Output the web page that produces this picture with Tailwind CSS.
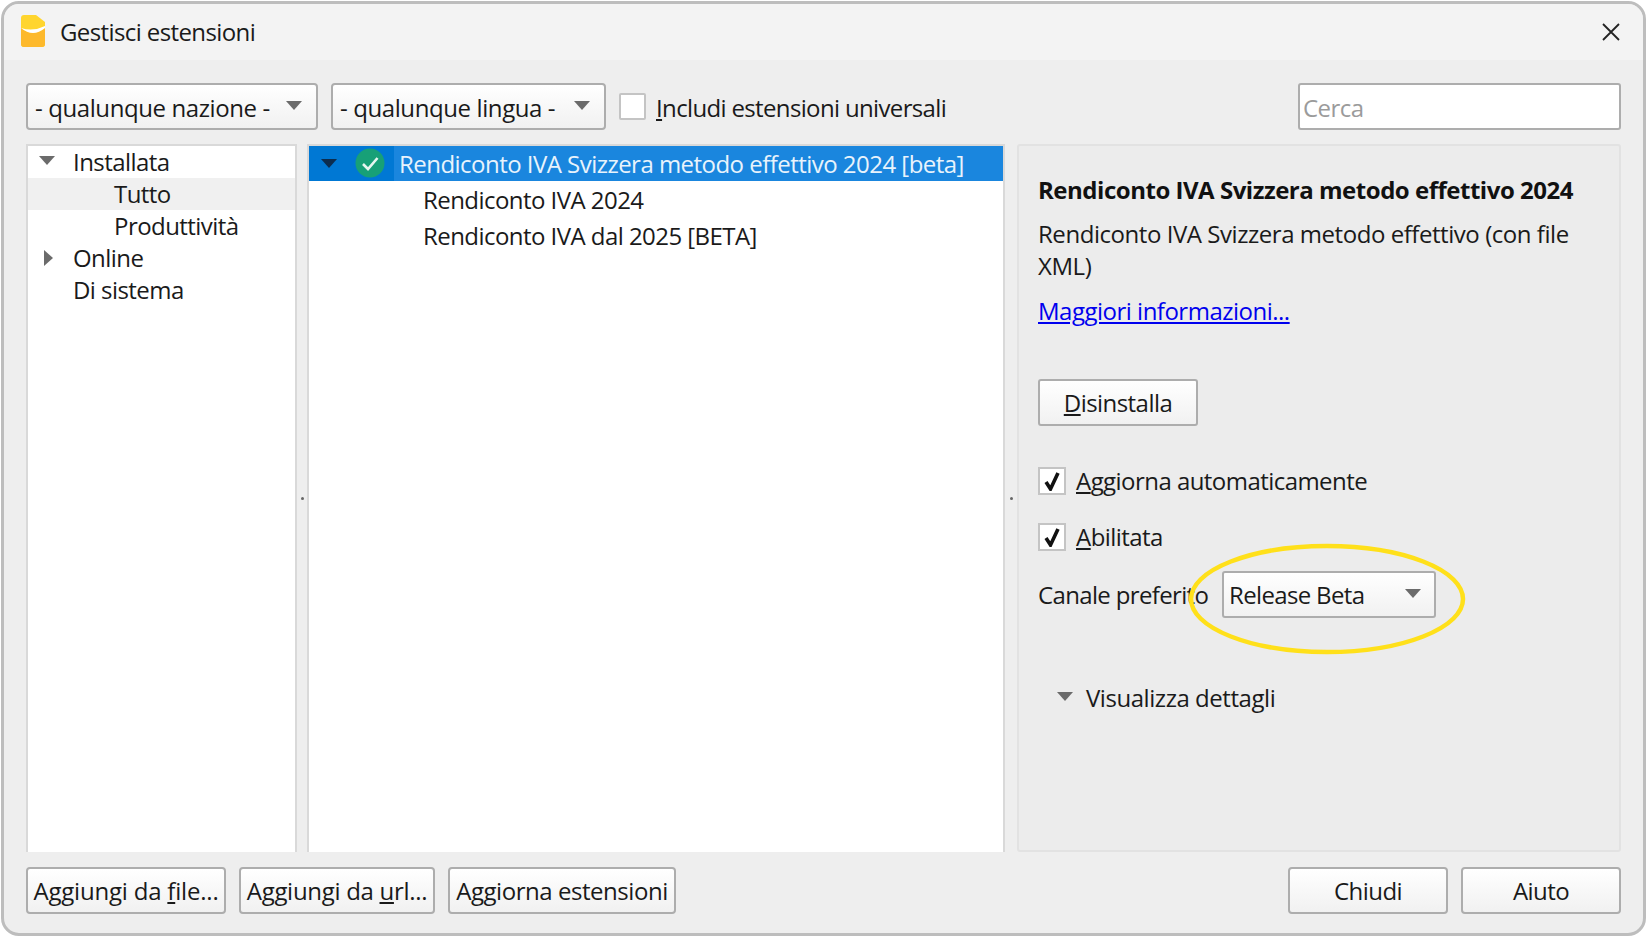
<!DOCTYPE html>
<html lang="it">
<head>
<meta charset="UTF-8">
<title>Gestisci estensioni</title>
<script src="https://cdn.jsdelivr.net/npm/@tailwindcss/browser@4"></script>
</head>
<body class="bg-white w-[1648px] h-[938px] overflow-hidden font-['Open_Sans',sans-serif] text-[24px] tracking-[-0.55px] text-[#1a1a1a]">
<div class="relative ml-[1px] mt-[1px] w-[1645px] h-[935px] border-[3px] border-[#bdbdbd] rounded-[18px] bg-[#eeeeee] flex flex-col overflow-hidden">

  <!-- title bar -->
  <div class="h-[56px] shrink-0 bg-[#f3f3f3] flex items-center pl-[17px] pr-[21px]">
    <svg class="w-[24px] h-[32px] -mt-[3px]" viewBox="0 0 24 32">
      <path d="M3 0H15L24 7V29a3 3 0 0 1-3 3H3a3 3 0 0 1-3-3V3a3 3 0 0 1 3-3Z" fill="#ffd52e"/>
      <path d="M0 13Q12 22 24 13V29a3 3 0 0 1-3 3H3a3 3 0 0 1-3-3Z" fill="#fdb92c"/>
      <path d="M0 13Q12 17 24 11V13Q12 23 0 13Z" fill="#fff"/>
    </svg>
    <span class="ml-[15px] tracking-[-0.6px]">Gestisci estensioni</span>
    <svg class="ml-auto w-[18px] h-[18px] mr-[2px]" viewBox="0 0 18 18" fill="none" stroke="#222" stroke-width="1.8"><path d="M1 1L17 17M17 1L1 17"/></svg>
  </div>

  <!-- filters -->
  <div class="flex items-center mt-[23px] px-[22px] h-[47px] shrink-0">
    <div class="w-[292px] h-full flex items-center pl-[7px] pr-[14px] border-2 border-[#adadad] rounded-[4px] bg-linear-to-b from-white to-[#f1f1f1]">
      <span class="pt-[2px] tracking-[-0.4px]">- qualunque nazione -</span>
      <svg class="ml-auto w-[16px] h-[9px] -mt-[3px]" viewBox="0 0 16 9"><path d="M0 0H16L8 9Z" fill="#6b6b6b"/></svg>
    </div>
    <div class="ml-[13px] w-[275px] h-full flex items-center pl-[7px] pr-[14px] border-2 border-[#adadad] rounded-[4px] bg-linear-to-b from-white to-[#f1f1f1]">
      <span class="pt-[2px] tracking-[-0.4px]">- qualunque lingua -</span>
      <svg class="ml-auto w-[16px] h-[9px] -mt-[3px]" viewBox="0 0 16 9"><path d="M0 0H16L8 9Z" fill="#6b6b6b"/></svg>
    </div>
    <div class="ml-[13px] w-[27px] h-[27px] border-2 border-[#c4c4c4] rounded-[2px] bg-white"></div>
    <span class="ml-[10px] pt-[2px] tracking-[-0.65px]"><u>I</u>ncludi estensioni universali</span>
    <div class="ml-auto w-[323px] h-full flex items-center pl-[3px] pt-[2px] border-2 border-[#adadad] rounded-[3px] bg-white text-[#9b9b9b]">Cerca</div>
  </div>

  <!-- panels -->
  <div class="flex mt-[14px] mx-[22px] h-[708px] shrink-0">
    <!-- tree -->
    <div class="w-[271px] bg-white border-t-2 border-x-2 border-[#d9d9d9]">
      <div class="h-[32px] flex items-center relative pl-[45px]">
        <svg class="absolute left-[11px] top-[10px] w-[16px] h-[9px]" viewBox="0 0 16 9"><path d="M0 0H16L8 9Z" fill="#6b6b6b"/></svg>
        Installata
      </div>
      <div class="h-[32px] flex items-center pl-[86px] bg-[#f0f0f0]">Tutto</div>
      <div class="h-[32px] flex items-center pl-[86px]">Produttività</div>
      <div class="h-[32px] flex items-center relative pl-[45px]">
        <svg class="absolute left-[16px] top-[8px] w-[9px] h-[16px]" viewBox="0 0 9 16"><path d="M0 0L9 8L0 16Z" fill="#6b6b6b"/></svg>
        Online
      </div>
      <div class="h-[32px] flex items-center pl-[45px]">Di sistema</div>
    </div>
    <!-- splitter -->
    <div class="w-[10px] flex items-center justify-center"><div class="w-[3px] h-[3px] bg-[#666] rounded-full"></div></div>
    <!-- list -->
    <div class="w-[698px] bg-white border-t-2 border-x-2 border-[#d9d9d9]">
      <div class="h-[35px] flex items-center bg-[#1a86de] text-[#e8f3fc]">
        <div class="w-[85px] h-full bg-[#0078d4] relative shrink-0">
          <svg class="absolute left-[12px] top-[13px] w-[16px] h-[9px]" viewBox="0 0 16 9"><path d="M0 0H16L8 9Z" fill="#0c2d4f"/></svg>
          <svg class="absolute left-[46px] top-[2px] w-[30px] h-[30px]" viewBox="0 0 30 30"><circle cx="15" cy="15" r="14.5" fill="#17a077"/><path d="M8 16l5 5 9.5-11" fill="none" stroke="#e6f5ef" stroke-width="2.6"/></svg>
        </div>
        <span class="ml-[5px] tracking-[-0.53px]">Rendiconto IVA Svizzera metodo effettivo 2024 [beta]</span>
      </div>
      <div class="h-[37px] flex items-center pl-[114px]">Rendiconto IVA 2024</div>
      <div class="h-[36px] flex items-center pl-[114px]">Rendiconto IVA dal 2025 [BETA]</div>
    </div>
    <!-- splitter -->
    <div class="w-[12px] flex items-center justify-center"><div class="w-[3px] h-[3px] bg-[#666] rounded-full"></div></div>
    <!-- details -->
    <div class="w-[604px] bg-[#ececec] border-2 border-[#e2e2e2] rounded-[3px] pl-[19px] pt-[28px] flex flex-col items-start">
      <div class="font-bold leading-[32px] tracking-[-0.48px] text-[#111]">Rendiconto IVA Svizzera metodo effettivo 2024</div>
      <div class="mt-[12px] leading-[32px] w-[560px] tracking-[-0.45px]">Rendiconto IVA Svizzera metodo effettivo (con file XML)</div>
      <a class="mt-[13px] leading-[32px] text-[#0000ee] underline tracking-[-0.5px]">Maggiori informazioni...</a>
      <div class="mt-[52px] w-[160px] h-[47px] flex items-center justify-center border-2 border-[#adadad] rounded-[3px] bg-linear-to-b from-white to-[#f1f1f1]"><span><u>D</u>isinstalla</span></div>
      <div class="mt-[41px] flex items-center h-[28px]">
        <div class="w-[28px] h-[28px] border-2 border-[#c4c4c4] bg-white flex items-center justify-center">
          <svg class="w-[16px] h-[19px]" viewBox="0 0 16 19" fill="none" stroke="#111" stroke-width="3.6"><path d="M2 10l4.5 7L14 1"/></svg>
        </div>
        <span class="ml-[10px]"><u>A</u>ggiorna automaticamente</span>
      </div>
      <div class="mt-[28px] flex items-center h-[28px]">
        <div class="w-[28px] h-[28px] border-2 border-[#c4c4c4] bg-white flex items-center justify-center">
          <svg class="w-[16px] h-[19px]" viewBox="0 0 16 19" fill="none" stroke="#111" stroke-width="3.6"><path d="M2 10l4.5 7L14 1"/></svg>
        </div>
        <span class="ml-[10px]"><u>A</u>bilitata</span>
      </div>
      <div class="mt-[20px] flex items-center h-[47px]">
        <span class="w-[184px] tracking-[-0.65px]">Canale preferito</span>
        <div class="w-[214px] h-full flex items-center pl-[5px] pr-[13px] border-2 border-[#adadad] rounded-[3px] bg-linear-to-b from-white to-[#f1f1f1]">
          <span class="tracking-[-0.65px]">Release Beta</span>
          <svg class="ml-auto w-[16px] h-[9px] -mt-[3px]" viewBox="0 0 16 9"><path d="M0 0H16L8 9Z" fill="#6b6b6b"/></svg>
        </div>
      </div>
      <div class="mt-[64px] flex items-center h-[32px] ml-[19px]">
        <svg class="w-[16px] h-[9px] -mt-[3px]" viewBox="0 0 16 9"><path d="M0 0H16L8 9Z" fill="#6b6b6b"/></svg>
        <span class="ml-[13px] tracking-[-0.45px]">Visualizza dettagli</span>
      </div>
    </div>
  </div>

  <!-- bottom buttons -->
  <div class="flex mt-[15px] px-[22px] h-[47px] shrink-0">
    <div class="w-[200px] h-full flex items-center justify-center border-2 border-[#adadad] rounded-[4px] bg-linear-to-b from-white to-[#f1f1f1]"><span class="tracking-[-0.2px]">Aggiungi da <u>f</u>ile...</span></div>
    <div class="ml-[13px] w-[196px] h-full flex items-center justify-center border-2 border-[#adadad] rounded-[4px] bg-linear-to-b from-white to-[#f1f1f1]"><span class="tracking-[-0.3px]">Aggiungi da <u>u</u>rl...</span></div>
    <div class="ml-[13px] w-[228px] h-full flex items-center justify-center border-2 border-[#adadad] rounded-[4px] bg-linear-to-b from-white to-[#f1f1f1]"><span class="tracking-[-0.45px]">Ag<u>g</u>iorna estensioni</span></div>
    <div class="ml-auto w-[160px] h-full flex items-center justify-center border-2 border-[#adadad] rounded-[4px] bg-linear-to-b from-white to-[#f1f1f1]">Chiudi</div>
    <div class="ml-[13px] w-[160px] h-full flex items-center justify-center border-2 border-[#adadad] rounded-[4px] bg-linear-to-b from-white to-[#f1f1f1]">Aiuto</div>
  </div>

  <!-- yellow annotation over the dropdown -->
  <svg class="absolute left-[1183px] top-[538px] w-[280px] h-[114px]" viewBox="0 0 280 114" fill="none"><ellipse cx="140" cy="57" rx="136" ry="53" stroke="#ffe01a" stroke-width="4.5"/></svg>
</div>
</body>
</html>
